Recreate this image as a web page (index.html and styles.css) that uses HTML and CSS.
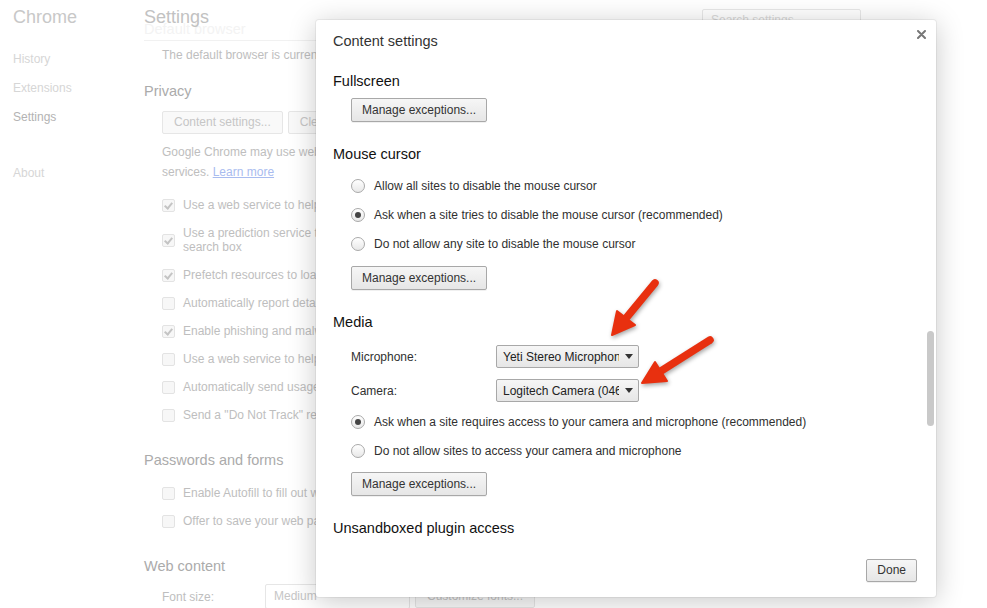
FILE: index.html
```html
<!DOCTYPE html>
<html lang="en">
<head>
    <meta charset="UTF-8">
    <title>Settings - Content settings</title>
    <link rel="stylesheet" href="styles.css">
</head>
<body>
    <div class="page">
        <!-- Sidebar -->
        <nav class="sidebar">
            <div class="brand">Chrome</div>
            <ul class="nav">
                <li>History</li>
                <li>Extensions</li>
                <li class="active">Settings</li>
                <li class="about">About</li>
            </ul>
        </nav>

        <!-- Settings page (faded behind the dialog) -->
        <main class="main">
            <header class="page-header">
                <div class="page-titles">
                    <div class="ghost">Default browser</div>
                    <h1>Settings</h1>
                </div>
                <div class="search">Search settings</div>
            </header>

            <div class="default-line">The default browser is currently Google Chrome.</div>

            <h2 class="section-title">Privacy</h2>
            <div class="button-row">
                <div class="ghost-btn">Content settings...</div>
                <div class="ghost-btn">Clear browsing data...</div>
            </div>
            <p class="para">Google Chrome may use web services to improve your browsing experience. You may optionally disable these<br>services. <a href="#">Learn more</a></p>

            <div class="check-list">
                <div class="check-row"><span class="checkbox checked"></span><span>Use a web service to help resolve navigation errors</span></div>
                <div class="check-row tall"><span class="checkbox checked"></span><span>Use a prediction service to help complete searches and URLs typed in the address bar or the app launcher<br>search box</span></div>
                <div class="check-row"><span class="checkbox checked"></span><span>Prefetch resources to load pages more quickly</span></div>
                <div class="check-row"><span class="checkbox"></span><span>Automatically report details of possible security incidents to Google</span></div>
                <div class="check-row"><span class="checkbox checked"></span><span>Enable phishing and malware protection</span></div>
                <div class="check-row"><span class="checkbox"></span><span>Use a web service to help resolve spelling errors</span></div>
                <div class="check-row"><span class="checkbox"></span><span>Automatically send usage statistics and crash reports to Google</span></div>
                <div class="check-row"><span class="checkbox"></span><span>Send a "Do Not Track" request with your browsing traffic</span></div>
            </div>

            <h2 class="section-title spaced">Passwords and forms</h2>
            <div class="check-list">
                <div class="check-row"><span class="checkbox"></span><span>Enable Autofill to fill out web forms in a single click.</span></div>
                <div class="check-row"><span class="checkbox"></span><span>Offer to save your web passwords.</span></div>
            </div>

            <h2 class="section-title spaced">Web content</h2>
            <div class="font-row">
                <span class="font-label">Font size:</span>
                <div class="ghost-select">Medium</div>
                <div class="ghost-btn">Customize fonts...</div>
            </div>
        </main>
    </div>

    <!-- Content settings dialog -->
    <div class="dialog">
        <div class="dialog-header">
            <h3 class="dialog-title">Content settings</h3>
            <svg class="close" width="9" height="9" viewBox="0 0 9 9">
                <path d="M1 1 L8 8 M8 1 L1 8" stroke="#777" stroke-width="2" stroke-linecap="round"/>
            </svg>
        </div>

        <div class="dialog-body">
            <section class="ds-section">
                <h4 class="ds-title">Fullscreen</h4>
                <div class="ds-btn">Manage exceptions...</div>
            </section>

            <section class="ds-section">
                <h4 class="ds-title">Mouse cursor</h4>
                <div class="radio-list">
                    <div class="radio-row"><span class="radio"></span>Allow all sites to disable the mouse cursor</div>
                    <div class="radio-row"><span class="radio checked"></span>Ask when a site tries to disable the mouse cursor (recommended)</div>
                    <div class="radio-row"><span class="radio"></span>Do not allow any site to disable the mouse cursor</div>
                </div>
                <div class="ds-btn">Manage exceptions...</div>
            </section>

            <section class="ds-section">
                <h4 class="ds-title">Media</h4>
                <div class="media-rows">
                    <div class="field-row">
                        <span class="field-label">Microphone:</span>
                        <div class="ds-select"><span class="select-text">Yeti Stereo Microphone</span><span class="caret"></span></div>
                    </div>
                    <div class="field-row">
                        <span class="field-label">Camera:</span>
                        <div class="ds-select"><span class="select-text">Logitech Camera (046d:0825)</span><span class="caret"></span></div>
                    </div>
                </div>
                <div class="radio-list tight">
                    <div class="radio-row"><span class="radio checked"></span>Ask when a site requires access to your camera and microphone (recommended)</div>
                    <div class="radio-row"><span class="radio"></span>Do not allow sites to access your camera and microphone</div>
                </div>
                <div class="ds-btn">Manage exceptions...</div>
            </section>

            <section class="ds-section">
                <h4 class="ds-title">Unsandboxed plugin access</h4>
            </section>
        </div>

        <div class="dialog-footer">
            <div class="ds-btn done">Done</div>
        </div>

        <div class="scroll-thumb"></div>
    </div>

    <!-- Annotation arrows -->
    <svg class="arrows" width="130" height="130" viewBox="0 0 130 130">
        <g class="arrow">
            <line x1="55" y1="13" x2="27" y2="47" stroke-width="7.5" stroke-linecap="round"/>
            <polygon points="12,65 35,55 17,41"/>
        </g>
        <g class="arrow">
            <line x1="110" y1="70" x2="61" y2="101" stroke-width="7.5" stroke-linecap="round"/>
            <polygon points="42,113 67,111 55,92"/>
        </g>
    </svg>
</body>
</html>
```

FILE: styles.css
```css
* {
    margin: 0;
    padding: 0;
    box-sizing: border-box;
}

body {
    font-family: "Liberation Sans", Arial, sans-serif;
    font-size: 12px;
    background: #fff;
    width: 987px;
    height: 608px;
    overflow: hidden;
    position: relative;
}

.page {
    display: flex;
}

/* Sidebar */
.sidebar {
    width: 144px;
    padding-left: 13px;
    flex-shrink: 0;
}

.brand {
    font-size: 18px;
    line-height: 22px;
    margin-top: 6px;
    color: #c8c8c8;
}

.nav {
    list-style: none;
    margin-top: 17px;
}

.nav li {
    line-height: 29px;
    color: #d6d6d6;
}

.nav li.active {
    color: #b3b3b3;
}

.nav li.about {
    margin-top: 27px;
}

/* Faded settings page */
.main {
    width: 717px;
    color: #bebebe;
}

.page-header {
    height: 41px;
    border-bottom: 1px solid #f1f1f1;
    display: flex;
    justify-content: space-between;
    overflow: hidden;
}

/* the scrolled heading shows faintly through the header */
.ghost {
    font-size: 14.5px;
    line-height: 16px;
    padding-top: 21px;
    margin-bottom: -37px;
    color: #f3f3f3;
}

.page-titles h1 {
    font-size: 18px;
    font-weight: normal;
    line-height: 22px;
    padding-top: 6px;
    color: #c2c2c2;
}

.search {
    width: 159px;
    height: 22px;
    margin-top: 9px;
    border: 1px solid #e8e8e8;
    border-radius: 2px;
    padding-left: 8px;
    line-height: 20px;
    color: #dadada;
}

.default-line {
    padding-left: 18px;
    margin-top: 4px;
    line-height: 20px;
}

.section-title {
    font-size: 14.5px;
    font-weight: normal;
    line-height: 20px;
    color: #ababab;
    margin-top: 16px;
}

.section-title.spaced {
    margin-top: 21px;
}

.button-row {
    display: flex;
    gap: 5px;
    padding-left: 18px;
    margin-top: 10px;
}

.ghost-btn {
    height: 23px;
    line-height: 21px;
    padding: 0 11px;
    border: 1px solid #e6e6e6;
    border-radius: 2px;
    background: #f9f9f9;
    color: #c6c6c6;
    white-space: nowrap;
}

.para {
    padding-left: 18px;
    margin-top: 8px;
    line-height: 20px;
    white-space: nowrap;
}

.para a {
    color: #a9bcef;
}

.check-list {
    margin-top: 9px;
}

.check-row {
    display: flex;
    align-items: center;
    gap: 8px;
    height: 28px;
    padding-left: 18px;
    white-space: nowrap;
}

.check-row.tall {
    height: 42px;
    line-height: 14px;
}

.checkbox {
    width: 13px;
    height: 13px;
    border: 1px solid #e3e3e3;
    border-radius: 2px;
    background: #f7f7f7;
    flex-shrink: 0;
    position: relative;
}

.checkbox.checked::after {
    content: "";
    position: absolute;
    left: 3px;
    top: 1px;
    width: 3px;
    height: 6px;
    border-right: 2px solid #c4c4c4;
    border-bottom: 2px solid #c4c4c4;
    transform: rotate(40deg);
}

.font-row {
    display: flex;
    align-items: center;
    padding-left: 18px;
    margin-top: 8px;
}

.font-label {
    width: 103px;
}

.ghost-select {
    width: 145px;
    height: 25px;
    line-height: 23px;
    padding-left: 8px;
    border: 1px solid #e6e6e6;
    border-radius: 2px;
    color: #c6c6c6;
    margin-right: 5px;
}

/* Dialog */
.dialog {
    position: absolute;
    left: 316px;
    top: 20px;
    width: 620px;
    height: 577px;
    background: #fff;
    border-radius: 3px;
    box-shadow: 0 0 0 1px rgba(0,0,0,0.05), 0 4px 28px rgba(0,0,0,0.22);
    display: flex;
    flex-direction: column;
    color: #303030;
}

.dialog-header {
    height: 42px;
    display: flex;
    justify-content: space-between;
    padding: 0 10px 0 17px;
    flex-shrink: 0;
}

.dialog-title {
    font-size: 14.5px;
    font-weight: normal;
    line-height: 16px;
    padding-top: 13px;
    color: #333;
}

.close {
    margin-top: 10px;
}

.dialog-body {
    flex: 1;
    overflow: hidden;
    padding: 8px 0 0 17px;
}

.ds-section + .ds-section {
    margin-top: 21px;
}

.ds-title {
    font-size: 14.5px;
    font-weight: normal;
    line-height: 20px;
    padding-top: 1px;
    color: #111;
}

.ds-btn {
    display: inline-block;
    height: 24px;
    line-height: 22px;
    padding: 0 10px;
    margin: 7px 0 0 18px;
    border: 1px solid #a8a8a8;
    border-radius: 2px;
    background: linear-gradient(#f6f6f6, #e6e6e6);
    box-shadow: 0 1px 0 rgba(0,0,0,0.06);
    color: #333;
    white-space: nowrap;
}

.radio-list {
    margin-top: 7px;
}

.radio-list.tight {
    margin-top: 5px;
}

.radio-list + .ds-btn {
    margin-top: 8px;
}

.radio-list.tight + .ds-btn {
    margin-top: 7px;
}

.radio-row {
    display: flex;
    align-items: center;
    gap: 9px;
    height: 29px;
    padding-left: 18px;
    white-space: nowrap;
}

.radio {
    width: 14px;
    height: 14px;
    border: 1px solid #a9a9a9;
    border-radius: 50%;
    background: linear-gradient(#fff, #e8e8e8);
    flex-shrink: 0;
    display: flex;
    align-items: center;
    justify-content: center;
}

.radio.checked::after {
    content: "";
    width: 6px;
    height: 6px;
    border-radius: 50%;
    background: #444;
}

.media-rows {
    display: flex;
    flex-direction: column;
    gap: 11px;
    margin-top: 13px;
}

.field-row {
    display: flex;
    align-items: center;
    padding-left: 18px;
}

.field-label {
    width: 145px;
}

.ds-select {
    width: 143px;
    height: 23px;
    display: flex;
    align-items: center;
    padding-left: 6px;
    border: 1px solid #a8a8a8;
    border-radius: 2px;
    background: linear-gradient(#f6f6f6, #e6e6e6);
    color: #222;
}

.select-text {
    flex: 1;
    overflow: hidden;
    white-space: nowrap;
}

.caret {
    width: 0;
    height: 0;
    margin: 0 5px 0 6px;
    border-left: 4px solid transparent;
    border-right: 4px solid transparent;
    border-top: 5px solid #333;
}

.dialog-footer {
    height: 52px;
    display: flex;
    justify-content: flex-end;
    align-items: flex-start;
    padding: 14px 19px 0 0;
    flex-shrink: 0;
}

.ds-btn.done {
    margin: 0;
    height: 23px;
    line-height: 21px;
}

.scroll-thumb {
    position: absolute;
    top: 311px;
    right: 2px;
    width: 7px;
    height: 95px;
    border-radius: 4px;
    background: #c9c9c9;
}

/* Annotations */
.arrows {
    position: absolute;
    left: 600px;
    top: 270px;
    overflow: visible;
    filter: drop-shadow(1px 2px 2px rgba(0,0,0,0.35));
}

.arrow line {
    stroke: #e8300f;
}

.arrow polygon {
    fill: #e8300f;
    stroke: #e8300f;
    stroke-width: 2;
    stroke-linejoin: round;
}
```
